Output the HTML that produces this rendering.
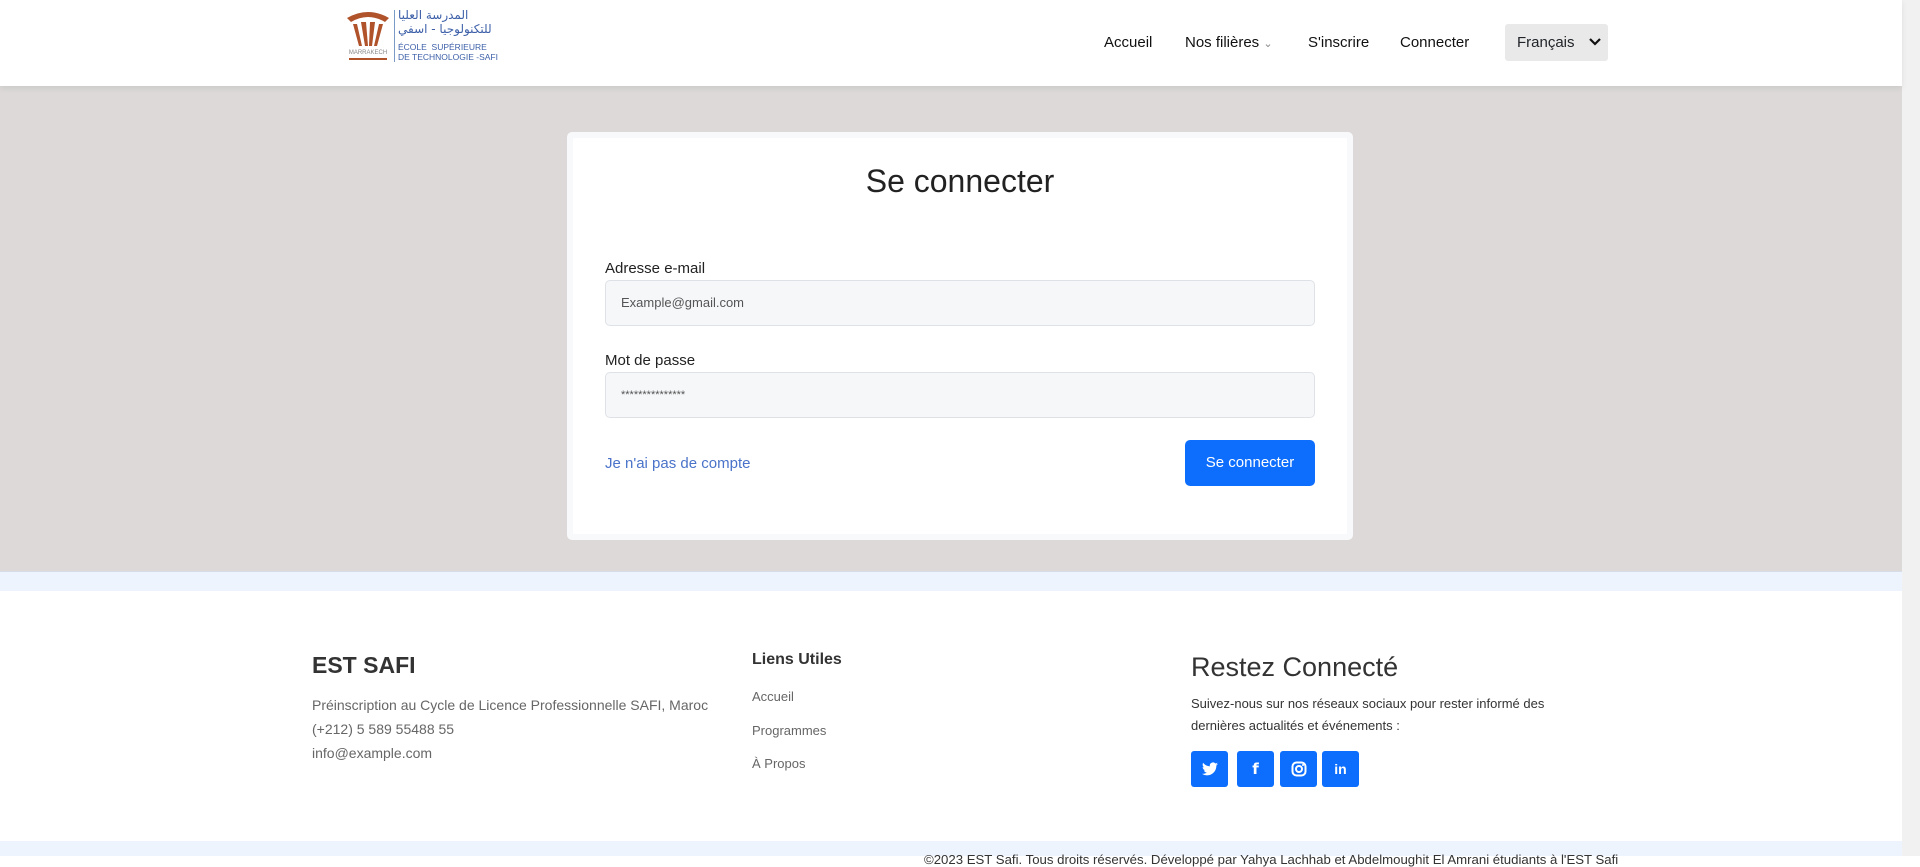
<!DOCTYPE html>
<html><head><meta charset="utf-8"><style>
*{box-sizing:border-box;margin:0;padding:0}
body{width:1920px;height:856px;overflow:hidden;font-family:"Liberation Sans",sans-serif;background:#fff;position:relative;color:#212529}
.abs{position:absolute}
header{position:absolute;left:0;top:0;width:1902px;height:86px;background:#fff;box-shadow:0 2px 6px rgba(0,0,0,.08);z-index:2}
.nav{font-size:15px;color:#111;top:34px;font-weight:500}
.gray{left:0;top:86px;width:1902px;height:485px;background:#dcd9d8}
.card{left:567px;top:132px;width:786px;height:408px;background:#f8f9fa;border-radius:5px;padding:6px}
.inner{background:#fff;width:100%;height:100%}
.lbl{font-size:15px;color:#222}
.inp{left:605px;width:710px;height:46px;border:1px solid #dee2e6;border-radius:5px;background:#f6f7f9;font-size:13px;color:#555;padding:14px 0 0 15px}
.btn{background:#0d6efd;border-radius:5px}
.soc{top:751px;width:37px;height:36px;background:#0d6efd;border-radius:3px;color:#fff;font-weight:bold;text-align:center;line-height:36px;font-size:15px}
.ft{font-size:14px;color:#666}
</style></head><body>
<header>
 <div class="abs" style="left:343px;top:10px;width:50px;height:54px">
  <svg width="50" height="54"><g fill="#b0522a"><path d="M4 8 Q25 -4 46 8 L42 12 Q25 2 8 12Z"/><path d="M10 14 L16 36 L19 36 L14 14Z"/><path d="M18 12 L22 36 L25 36 L23 12Z"/><path d="M27 12 L26 36 L29 36 L32 12Z"/><path d="M36 14 L31 36 L34 36 L40 14Z"/></g><text x="25" y="44" font-size="6" text-anchor="middle" fill="#888">MARRAKECH</text><rect x="6" y="48" width="38" height="2" fill="#b0522a"/></svg>
 </div>
 <div class="abs" style="left:394px;top:10px;width:1px;height:52px;background:#7a9ac8"></div>
 <div class="abs" style="left:398px;top:8px;font-size:12px;color:#3c5fa8;font-family:'DejaVu Sans',sans-serif;line-height:14px">المدرسة العليا<br>للتكنولوجيا - اسفي</div>
 <div class="abs" style="left:398px;top:42px;font-size:8.5px;color:#3c5fa8;line-height:10px">ÉCOLE &nbsp;SUPÉRIEURE<br>DE TECHNOLOGIE -SAFI</div>
 <div class="abs nav" style="left:1104px">Accueil</div>
 <div class="abs nav" style="left:1185px">Nos filières <span style="color:#888;font-size:11px">&#8964;</span></div>
 <div class="abs nav" style="left:1308px">S'inscrire</div>
 <div class="abs nav" style="left:1400px">Connecter</div>
 <div class="abs" style="left:1505px;top:24px;width:103px;height:37px;background:#e9e9e9;border-radius:3px;font-size:15px;padding:10px 0 0 12px">Français
  <svg class="abs" style="left:84px;top:14px" width="12" height="9"><path d="M1 1 L6 6 L11 1" stroke="#111" stroke-width="2.2" fill="none"/></svg></div>
</header>
<div class="abs gray"></div>
<div class="abs card"><div class="inner"></div></div>
<div class="abs" style="left:567px;width:786px;top:163px;text-align:center;font-size:32px;color:#222">Se connecter</div>
<div class="abs lbl" style="left:605px;top:260px">Adresse e-mail</div>
<div class="abs inp" style="top:280px">Example@gmail.com</div>
<div class="abs lbl" style="left:605px;top:352px">Mot de passe</div>
<div class="abs inp" style="top:372px;font-size:11px;padding-top:16px">***************</div>
<div class="abs" style="left:605px;top:455px;font-size:15px;color:#4a73c9">Je n'ai pas de compte</div>
<div class="abs btn" style="left:1185px;top:440px;width:130px;height:46px;color:#fff;font-size:15px;text-align:center;line-height:46px">Se connecter</div>
<div class="abs" style="left:0;top:571px;width:1902px;height:20px;background:#eef4fd;border-top:1px solid #d6dde8"></div>
<div class="abs" style="left:1902px;top:0;width:18px;height:856px;background:#f1f1f1"></div>
<div class="abs" style="left:312px;top:652px;font-size:23px;font-weight:bold;color:#333">EST SAFI</div>
<div class="abs ft" style="left:312px;top:693px;line-height:24px">Préinscription au Cycle de Licence Professionnelle SAFI, Maroc<br>(+212) 5 589 55488 55<br>info@example.com</div>
<div class="abs" style="left:752px;top:651px;font-size:16px;font-weight:bold;color:#333">Liens Utiles</div>
<div class="abs ft" style="left:752px;top:680px;font-size:13px;line-height:33.5px">Accueil<br>Programmes<br>À Propos</div>
<div class="abs" style="left:1191px;top:652px;font-size:27px;color:#333">Restez Connecté</div>
<div class="abs" style="left:1191px;top:693px;font-size:13px;color:#333;line-height:22px">Suivez-nous sur nos réseaux sociaux pour rester informé des<br>dernières actualités et événements :</div>
<div class="abs soc" style="left:1191px"><svg width="16" height="14" style="margin-top:11px" viewBox="0 0 24 20"><path fill="#fff" d="M24 2.4a10 10 0 0 1-2.8.8A5 5 0 0 0 23.3.5a10 10 0 0 1-3.1 1.2A4.9 4.9 0 0 0 11.8 6 14 14 0 0 1 1.7.9a4.9 4.9 0 0 0 1.5 6.6A4.9 4.9 0 0 1 1 6.9a4.9 4.9 0 0 0 3.9 4.9 5 5 0 0 1-2.2.1 4.9 4.9 0 0 0 4.6 3.4A9.9 9.9 0 0 1 0 17.3 14 14 0 0 0 7.5 19.5c9 0 14-7.5 14-14v-.6A10 10 0 0 0 24 2.4z"/></svg></div>
<div class="abs soc" style="left:1237px;font-family:'DejaVu Sans'">f</div>
<div class="abs soc" style="left:1280px"><svg width="16" height="16" style="margin-top:10px"><rect x="1.5" y="1.5" width="13" height="13" rx="4" fill="none" stroke="#fff" stroke-width="2"/><circle cx="8" cy="8" r="3" fill="none" stroke="#fff" stroke-width="2"/><circle cx="12" cy="4" r="1" fill="#fff"/></svg></div>
<div class="abs soc" style="left:1322px;font-size:14px">in</div>
<div class="abs" style="left:0;top:841px;width:1902px;height:15px;background:#eef4fd"></div>
<div class="abs" style="left:924px;top:852px;font-size:13.2px;color:#333;white-space:nowrap">©2023 EST Safi. Tous droits réservés. Développé par Yahya Lachhab et Abdelmoughit El Amrani étudiants à l'EST Safi</div>
</body></html>
